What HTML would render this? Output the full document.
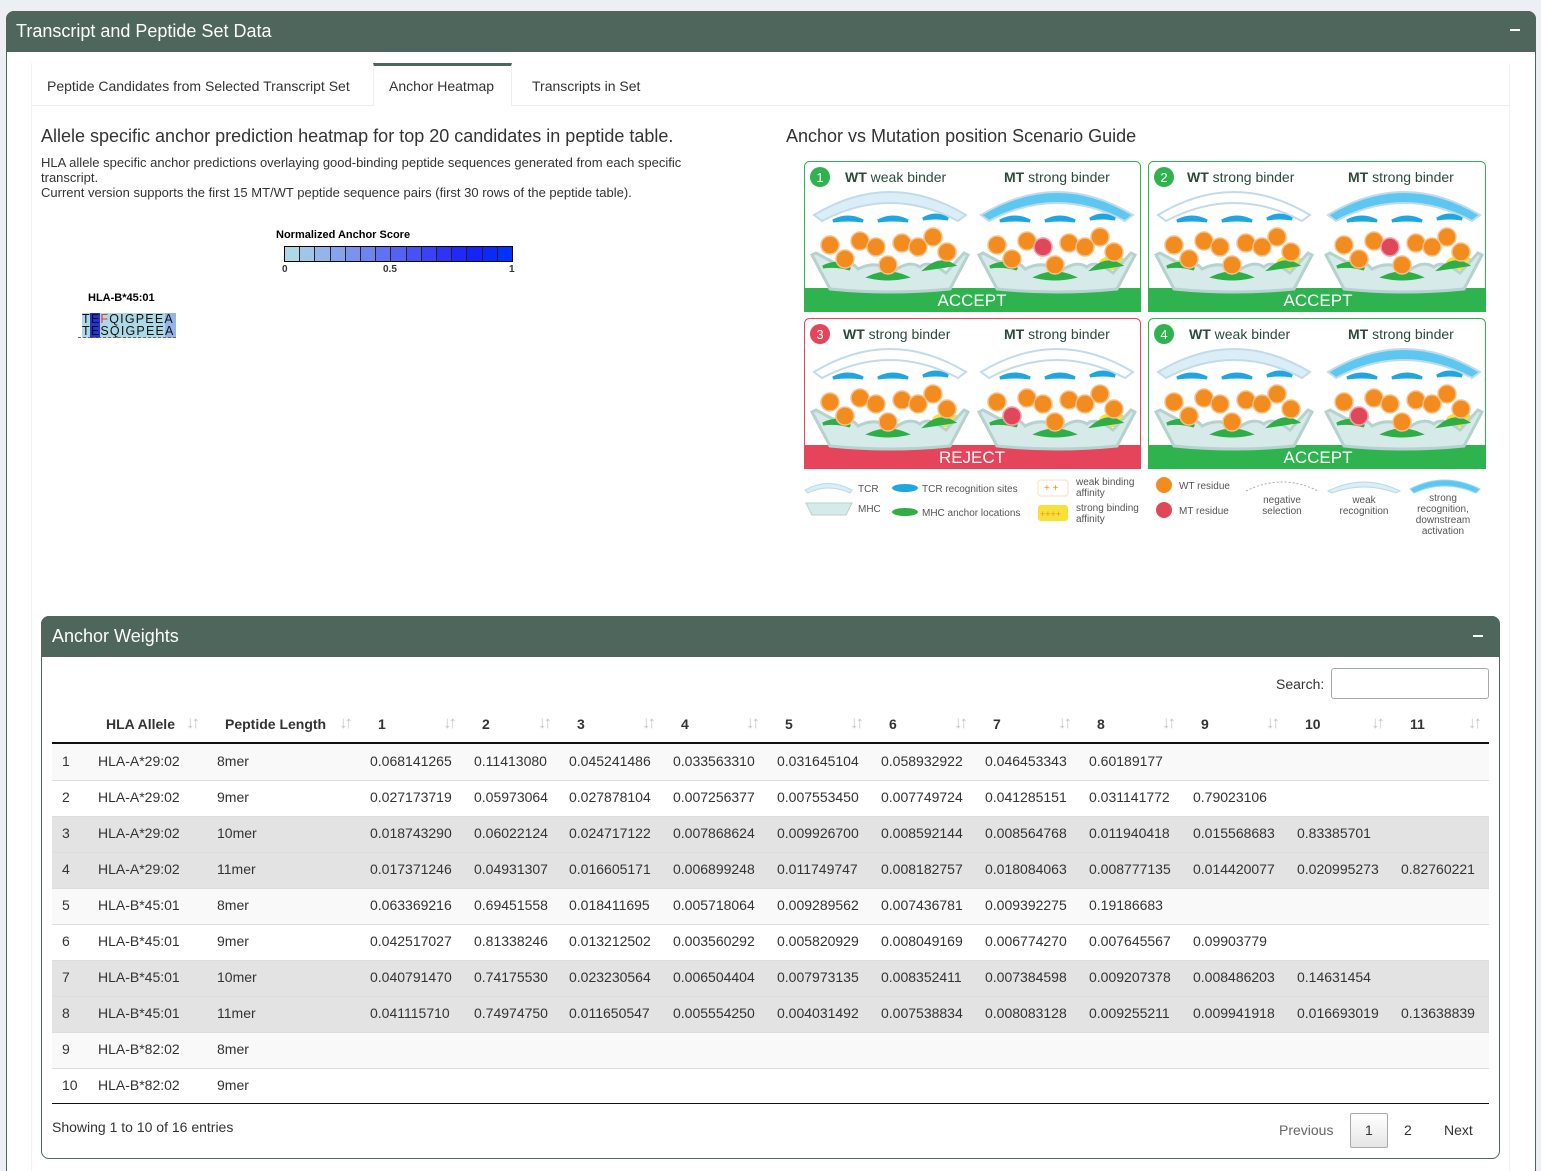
<!DOCTYPE html>
<html><head><meta charset="utf-8">
<style>
*{box-sizing:border-box;margin:0;padding:0}
html,body{width:1541px;height:1171px;overflow:hidden}
body{background:#ecf0f5;font-family:"Liberation Sans",sans-serif;color:#333;position:relative}
.abs{position:absolute}
.outer{left:6px;top:11px;width:1530px;height:1175px;background:#fff;border:1px solid #4f665c;border-radius:8px}
.hdr{left:6px;top:11px;width:1530px;height:41px;background:#4f665c;border-radius:8px 8px 0 0;color:#fff;font-size:18px;padding:10px 0 0 10px}
.tab{font-size:14px;color:#333;top:78px}
.t{font-size:14px;white-space:nowrap}
.th{font-size:14px;font-weight:bold;color:#333;top:716px}
.sort{color:#c8c8c8;font-size:17px;top:713px;letter-spacing:-3px;font-weight:bold}
.row{left:52px;width:1437px;height:36px;border-top:1px solid #ddd}
.cell{font-size:14px;color:#333;white-space:nowrap}
</style></head><body>
<div class="abs outer"></div>
<div class="abs hdr">Transcript and Peptide Set Data</div>
<div class="abs" style="left:1510px;top:29px;width:10px;height:2px;background:#fff"></div>
<div class="abs" style="left:31px;top:105px;width:1479px;height:1px;background:#eee"></div>
<div class="abs" style="left:31px;top:63px;width:1px;height:1108px;background:#f2f2f2"></div>
<div class="abs" style="left:1509px;top:63px;width:1px;height:1108px;background:#f2f2f2"></div>
<div class="abs" style="left:373px;top:63px;width:139px;height:43px;background:#fff;border:1px solid #eee;border-top:3px solid #4f665c;border-bottom:none"></div>
<div class="abs tab" style="left:47px">Peptide Candidates from Selected Transcript Set</div>
<div class="abs tab" style="left:389px">Anchor Heatmap</div>
<div class="abs tab" style="left:532px">Transcripts in Set</div>

<div class="abs" style="left:41px;top:126px;font-size:18px">Allele specific anchor prediction heatmap for top 20 candidates in peptide table.</div>
<div class="abs" style="left:41px;top:155px;font-size:13px;width:700px;line-height:15px">HLA allele specific anchor predictions overlaying good-binding peptide sequences generated from each specific transcript.<br>Current version supports the first 15 MT/WT peptide sequence pairs (first 30 rows of the peptide table).</div>
<div class="abs" style="left:786px;top:126px;font-size:18px">Anchor vs Mutation position Scenario Guide</div>

<div class="abs" style="left:276px;top:229px;font-size:11px;font-weight:bold;color:#000">Normalized Anchor Score</div>
<div class="abs" style="left:284px;top:246px;width:229px;height:16px;border:1px solid #000;display:flex">
<div style="flex:1;background:#add8e6;border-right:1px solid #222"></div><div style="flex:1;background:#a0c6e8;border-right:1px solid #222"></div><div style="flex:1;background:#93b5ea;border-right:1px solid #222"></div><div style="flex:1;background:#86a4ec;border-right:1px solid #222"></div><div style="flex:1;background:#7a93ee;border-right:1px solid #222"></div><div style="flex:1;background:#6d83ef;border-right:1px solid #222"></div><div style="flex:1;background:#6072f1;border-right:1px solid #222"></div><div style="flex:1;background:#5362f3;border-right:1px solid #222"></div><div style="flex:1;background:#4652f4;border-right:1px solid #222"></div><div style="flex:1;background:#3a42f6;border-right:1px solid #222"></div><div style="flex:1;background:#2d33f7;border-right:1px solid #222"></div><div style="flex:1;background:#2129f9;border-right:1px solid #222"></div><div style="flex:1;background:#1525fa;border-right:1px solid #222"></div><div style="flex:1;background:#0a2afc;border-right:1px solid #222"></div><div style="flex:1;background:#0033ff"></div></div>
<div class="abs" style="left:282px;top:264px;font-size:10px;font-weight:bold">0</div>
<div class="abs" style="left:383px;top:264px;font-size:10px;font-weight:bold">0.5</div>
<div class="abs" style="left:509px;top:264px;font-size:10px;font-weight:bold">1</div>
<div class="abs" style="left:88px;top:292px;font-size:11px;font-weight:bold;color:#000">HLA-B*45:01</div>
<div class="abs" style="left:82px;top:313px;width:94px;height:25px;background:#add8e6"></div>
<div class="abs" style="left:90px;top:313px;width:10px;height:25px;background:#2233d8"></div>
<div class="abs" style="left:165px;top:313px;width:11px;height:25px;background:#93b5ea"></div>
<div class="abs" style="left:82px;top:313px;font-size:12.5px;letter-spacing:1.2px;line-height:12px;color:#111">T<span>E</span><span style="color:#e33">F</span>QIGPEEA<br>TESQIGPEEA</div>
<div class="abs" style="left:78px;top:337px;width:98px;border-top:1px dashed #666"></div>

<svg class="abs" style="left:800px;top:155px" width="700" height="400" viewBox="0 0 700 400">
<defs>
<g id="ill">
<path d="M6,38 Q82,-8 158,38 L150,44 Q82,8 14,44 Z" fill="var(--tcr)" stroke="#c3dbe8" stroke-width="2"/>
<path d="M25,44 Q40,36 55,44 Q40,42 25,44Z M70,44 Q85,36 100,44 Q85,42 70,44Z M115,42 Q128,34 140,42 Q128,40 115,42Z" fill="#1fa6e0" stroke="#1fa6e0" stroke-width="3"/>
<path d="M4,78 L22,112 Q82,118 142,112 L160,78 L156,76 L138,96 Q120,82 112,90 Q100,82 84,96 Q70,82 50,92 Q42,82 34,90 L8,76 Z" fill="#d6ebe9" stroke="#b5d2ce" stroke-width="3"/>
<path d="M15,90 Q30,82 42,92 Q28,88 15,90Z M62,100 Q80,92 98,100 Q80,104 62,100Z M118,92 Q132,80 145,88 Q132,90 118,92Z" fill="#2fae48" stroke="#2fae48" stroke-width="3"/>
<g fill="#f28c1e" stroke="#f7c08a" stroke-width="1.5">
<circle cx="22" cy="68" r="9"/><circle cx="37" cy="82" r="9"/><circle cx="52" cy="64" r="9"/><circle cx="68" cy="70" r="9"/><circle cx="80" cy="88" r="9"/><circle cx="94" cy="66" r="9"/><circle cx="110" cy="70" r="9"/><circle cx="125" cy="60" r="9"/><circle cx="139" cy="75" r="9"/>
</g></g>
<g id="yel"><ellipse cx="30" cy="90" rx="14" ry="7" fill="#f7e03a"/><ellipse cx="82" cy="98" rx="16" ry="7" fill="#f7e03a"/><ellipse cx="138" cy="86" rx="14" ry="7" fill="#f7e03a"/></g>
</defs>
<g><rect x="4.5" y="6.5" width="336" height="150" rx="5" fill="#fff" stroke="#2fb34f"/><rect x="4" y="133" width="337" height="24" fill="#2fb34f"/>
<text x="172" y="151" font-size="17" fill="#fff" text-anchor="middle" font-family="Liberation Sans">ACCEPT</text>
<circle cx="20" cy="22" r="10" fill="#2fb34f"/><text x="20" y="27" font-size="13" fill="#fff" text-anchor="middle" font-family="Liberation Sans">1</text>
<text x="45" y="27" font-size="14" fill="#2a4a3a" font-family="Liberation Sans"><tspan font-weight="bold">WT</tspan> weak binder</text>
<text x="204" y="27" font-size="14" fill="#2a4a3a" font-family="Liberation Sans"><tspan font-weight="bold">MT</tspan> strong binder</text>
<use href="#ill" x="8" y="22" style="--tcr:#d9eef7"/><use href="#yel" x="175" y="22"/><use href="#ill" x="175" y="22" style="--tcr:#5cc8f2"/>
<circle cx="243" cy="92" r="9" fill="#e0475a" stroke="#f0a0b0" stroke-width="1.5"/></g>

<g transform="translate(344,0)"><rect x="4.5" y="6.5" width="337" height="150" rx="5" fill="#fff" stroke="#2fb34f"/><rect x="4" y="133" width="338" height="24" fill="#2fb34f"/>
<text x="174" y="151" font-size="17" fill="#fff" text-anchor="middle" font-family="Liberation Sans">ACCEPT</text>
<circle cx="20" cy="22" r="10" fill="#2fb34f"/><text x="20" y="27" font-size="13" fill="#fff" text-anchor="middle" font-family="Liberation Sans">2</text>
<text x="43" y="27" font-size="14" fill="#2a4a3a" font-family="Liberation Sans"><tspan font-weight="bold">WT</tspan> strong binder</text>
<text x="204" y="27" font-size="14" fill="#2a4a3a" font-family="Liberation Sans"><tspan font-weight="bold">MT</tspan> strong binder</text>
<use href="#yel" x="8" y="22"/><use href="#ill" x="8" y="22" style="--tcr:#fff"/><use href="#yel" x="178" y="22"/><use href="#ill" x="178" y="22" style="--tcr:#5cc8f2"/>
<circle cx="246" cy="92" r="9" fill="#e0475a" stroke="#f0a0b0" stroke-width="1.5"/></g>

<g transform="translate(0,157)"><rect x="4.5" y="6.5" width="336" height="150" rx="5" fill="#fff" stroke="#e5445a"/><rect x="4" y="133" width="337" height="24" fill="#e5445a"/>
<text x="172" y="151" font-size="17" fill="#fff" text-anchor="middle" font-family="Liberation Sans">REJECT</text>
<circle cx="20" cy="22" r="10" fill="#e5445a"/><text x="20" y="27" font-size="13" fill="#fff" text-anchor="middle" font-family="Liberation Sans">3</text>
<text x="43" y="27" font-size="14" fill="#2a4a3a" font-family="Liberation Sans"><tspan font-weight="bold">WT</tspan> strong binder</text>
<text x="204" y="27" font-size="14" fill="#2a4a3a" font-family="Liberation Sans"><tspan font-weight="bold">MT</tspan> strong binder</text>
<use href="#yel" x="8" y="22"/><use href="#ill" x="8" y="22" style="--tcr:#fff"/><use href="#yel" x="175" y="22"/><use href="#ill" x="175" y="22" style="--tcr:#fff"/>
<circle cx="212" cy="104" r="9" fill="#e0475a" stroke="#f0a0b0" stroke-width="1.5"/></g>

<g transform="translate(344,157)"><rect x="4.5" y="6.5" width="337" height="150" rx="5" fill="#fff" stroke="#2fb34f"/><rect x="4" y="133" width="338" height="24" fill="#2fb34f"/>
<text x="174" y="151" font-size="17" fill="#fff" text-anchor="middle" font-family="Liberation Sans">ACCEPT</text>
<circle cx="20" cy="22" r="10" fill="#2fb34f"/><text x="20" y="27" font-size="13" fill="#fff" text-anchor="middle" font-family="Liberation Sans">4</text>
<text x="45" y="27" font-size="14" fill="#2a4a3a" font-family="Liberation Sans"><tspan font-weight="bold">WT</tspan> weak binder</text>
<text x="204" y="27" font-size="14" fill="#2a4a3a" font-family="Liberation Sans"><tspan font-weight="bold">MT</tspan> strong binder</text>
<use href="#ill" x="8" y="22" style="--tcr:#d9eef7"/><use href="#yel" x="178" y="22"/><use href="#ill" x="178" y="22" style="--tcr:#5cc8f2"/>
<circle cx="215" cy="104" r="9" fill="#e0475a" stroke="#f0a0b0" stroke-width="1.5"/></g>

<g font-family="Liberation Sans" font-size="10" fill="#555">
<path d="M5,335 Q28,322 52,335 L50,338 Q28,328 8,338Z" fill="#d9eef7" stroke="#bcd8e6"/><text x="58" y="337">TCR</text>
<path d="M6,348 L12,360 L46,360 L52,348Z" fill="#d6ebe9" stroke="#b5d2ce"/><text x="58" y="357">MHC</text>
<ellipse cx="105" cy="333" rx="13" ry="4" fill="#1fa6e0"/><text x="122" y="337">TCR recognition sites</text>
<ellipse cx="105" cy="357" rx="13" ry="4" fill="#2fae48"/><text x="122" y="361">MHC anchor locations</text>
<rect x="238" y="325" width="30" height="16" rx="3" fill="#fff" stroke="#f3e2c0"/><text x="244" y="336" fill="#f28c1e" font-size="10">+ +</text><text x="276" y="330">weak binding</text><text x="276" y="341">affinity</text>
<rect x="238" y="350" width="30" height="16" rx="3" fill="#f7e03a"/><text x="240" y="362" fill="#f28c1e" font-size="9">++++</text><text x="276" y="356">strong binding</text><text x="276" y="367">affinity</text>
<circle cx="364" cy="330" r="8" fill="#f28c1e"/><text x="379" y="334">WT residue</text>
<circle cx="364" cy="355" r="8" fill="#e0475a"/><text x="379" y="359">MT residue</text>
<path d="M446,336 Q482,318 518,336" fill="#fff" stroke="#aaa" stroke-dasharray="2,2"/><text x="482" y="348" text-anchor="middle">negative</text><text x="482" y="359" text-anchor="middle">selection</text>
<path d="M528,336 Q564,318 600,336 L596,338 Q564,326 532,338Z" fill="#d9eef7" stroke="#bcd8e6"/><text x="564" y="348" text-anchor="middle">weak</text><text x="564" y="359" text-anchor="middle">recognition</text>
<path d="M610,334 Q644,316 680,334 L676,338 Q644,324 614,338Z" fill="#5cc8f2" stroke="#9ed8f0"/><text x="643" y="346" text-anchor="middle">strong</text><text x="643" y="357" text-anchor="middle">recognition,</text><text x="643" y="368" text-anchor="middle">downstream</text><text x="643" y="379" text-anchor="middle">activation</text>
</g>
</svg>

<div class="abs" style="left:41px;top:616px;width:1459px;height:543px;border:1px solid #4f665c;border-radius:8px;background:#fff"></div>
<div class="abs" style="left:41px;top:616px;width:1459px;height:41px;background:#4f665c;border-radius:8px 8px 0 0;color:#fff;font-size:18px;padding:10px 0 0 11px">Anchor Weights</div>
<div class="abs" style="left:1473px;top:635px;width:10px;height:2px;background:#fff"></div>
<div class="abs t" style="left:1276px;top:676px">Search:</div>
<div class="abs" style="left:1331px;top:668px;width:158px;height:31px;border:1px solid #aaa;border-radius:3px"></div>

<div class="abs th" style="left:106px">HLA Allele</div><div class="abs sort" style="left:186px">↓↑</div>
<div class="abs th" style="left:225px">Peptide Length</div><div class="abs sort" style="left:339px">↓↑</div>
<div class="abs th" style="left:378px">1</div><div class="abs sort" style="left:443px">↓↑</div>
<div class="abs th" style="left:482px">2</div><div class="abs sort" style="left:538px">↓↑</div>
<div class="abs th" style="left:577px">3</div><div class="abs sort" style="left:642px">↓↑</div>
<div class="abs th" style="left:681px">4</div><div class="abs sort" style="left:746px">↓↑</div>
<div class="abs th" style="left:785px">5</div><div class="abs sort" style="left:850px">↓↑</div>
<div class="abs th" style="left:889px">6</div><div class="abs sort" style="left:954px">↓↑</div>
<div class="abs th" style="left:993px">7</div><div class="abs sort" style="left:1058px">↓↑</div>
<div class="abs th" style="left:1097px">8</div><div class="abs sort" style="left:1162px">↓↑</div>
<div class="abs th" style="left:1201px">9</div><div class="abs sort" style="left:1266px">↓↑</div>
<div class="abs th" style="left:1305px">10</div><div class="abs sort" style="left:1371px">↓↑</div>
<div class="abs th" style="left:1410px">11</div><div class="abs sort" style="left:1468px">↓↑</div>
<div class="abs" style="left:52px;top:742px;width:1437px;height:2px;background:#111"></div>

<div class="abs row" style="top:744px;background:#f9f9f9;border-top:none"></div>
<div class="abs row" style="top:780px;background:#fff"></div>
<div class="abs row" style="top:816px;background:#e3e3e3"></div>
<div class="abs row" style="top:852px;background:#e3e3e3"></div>
<div class="abs row" style="top:888px;background:#f9f9f9"></div>
<div class="abs row" style="top:924px;background:#fff"></div>
<div class="abs row" style="top:960px;background:#e3e3e3"></div>
<div class="abs row" style="top:996px;background:#e3e3e3"></div>
<div class="abs row" style="top:1032px;background:#f9f9f9"></div>
<div class="abs row" style="top:1068px;background:#fff"></div>
<div class="abs" style="left:52px;top:1103px;width:1437px;height:1px;background:#111"></div>

<div class="abs" style="left:0;top:744px">
<div class="abs cell" style="top:9px;left:62px">1</div><div class="abs cell" style="top:9px;left:98px">HLA-A*29:02</div><div class="abs cell" style="top:9px;left:217px">8mer</div>
<div class="abs cell" style="top:9px;left:370px">0.068141265</div><div class="abs cell" style="top:9px;left:474px">0.11413080</div><div class="abs cell" style="top:9px;left:569px">0.045241486</div><div class="abs cell" style="top:9px;left:673px">0.033563310</div><div class="abs cell" style="top:9px;left:777px">0.031645104</div><div class="abs cell" style="top:9px;left:881px">0.058932922</div><div class="abs cell" style="top:9px;left:985px">0.046453343</div><div class="abs cell" style="top:9px;left:1089px">0.60189177</div>

<div class="abs cell" style="top:45px;left:62px">2</div><div class="abs cell" style="top:45px;left:98px">HLA-A*29:02</div><div class="abs cell" style="top:45px;left:217px">9mer</div>
<div class="abs cell" style="top:45px;left:370px">0.027173719</div><div class="abs cell" style="top:45px;left:474px">0.05973064</div><div class="abs cell" style="top:45px;left:569px">0.027878104</div><div class="abs cell" style="top:45px;left:673px">0.007256377</div><div class="abs cell" style="top:45px;left:777px">0.007553450</div><div class="abs cell" style="top:45px;left:881px">0.007749724</div><div class="abs cell" style="top:45px;left:985px">0.041285151</div><div class="abs cell" style="top:45px;left:1089px">0.031141772</div><div class="abs cell" style="top:45px;left:1193px">0.79023106</div>

<div class="abs cell" style="top:81px;left:62px">3</div><div class="abs cell" style="top:81px;left:98px">HLA-A*29:02</div><div class="abs cell" style="top:81px;left:217px">10mer</div>
<div class="abs cell" style="top:81px;left:370px">0.018743290</div><div class="abs cell" style="top:81px;left:474px">0.06022124</div><div class="abs cell" style="top:81px;left:569px">0.024717122</div><div class="abs cell" style="top:81px;left:673px">0.007868624</div><div class="abs cell" style="top:81px;left:777px">0.009926700</div><div class="abs cell" style="top:81px;left:881px">0.008592144</div><div class="abs cell" style="top:81px;left:985px">0.008564768</div><div class="abs cell" style="top:81px;left:1089px">0.011940418</div><div class="abs cell" style="top:81px;left:1193px">0.015568683</div><div class="abs cell" style="top:81px;left:1297px">0.83385701</div>

<div class="abs cell" style="top:117px;left:62px">4</div><div class="abs cell" style="top:117px;left:98px">HLA-A*29:02</div><div class="abs cell" style="top:117px;left:217px">11mer</div>
<div class="abs cell" style="top:117px;left:370px">0.017371246</div><div class="abs cell" style="top:117px;left:474px">0.04931307</div><div class="abs cell" style="top:117px;left:569px">0.016605171</div><div class="abs cell" style="top:117px;left:673px">0.006899248</div><div class="abs cell" style="top:117px;left:777px">0.011749747</div><div class="abs cell" style="top:117px;left:881px">0.008182757</div><div class="abs cell" style="top:117px;left:985px">0.018084063</div><div class="abs cell" style="top:117px;left:1089px">0.008777135</div><div class="abs cell" style="top:117px;left:1193px">0.014420077</div><div class="abs cell" style="top:117px;left:1297px">0.020995273</div><div class="abs cell" style="top:117px;left:1401px">0.82760221</div>

<div class="abs cell" style="top:153px;left:62px">5</div><div class="abs cell" style="top:153px;left:98px">HLA-B*45:01</div><div class="abs cell" style="top:153px;left:217px">8mer</div>
<div class="abs cell" style="top:153px;left:370px">0.063369216</div><div class="abs cell" style="top:153px;left:474px">0.69451558</div><div class="abs cell" style="top:153px;left:569px">0.018411695</div><div class="abs cell" style="top:153px;left:673px">0.005718064</div><div class="abs cell" style="top:153px;left:777px">0.009289562</div><div class="abs cell" style="top:153px;left:881px">0.007436781</div><div class="abs cell" style="top:153px;left:985px">0.009392275</div><div class="abs cell" style="top:153px;left:1089px">0.19186683</div>

<div class="abs cell" style="top:189px;left:62px">6</div><div class="abs cell" style="top:189px;left:98px">HLA-B*45:01</div><div class="abs cell" style="top:189px;left:217px">9mer</div>
<div class="abs cell" style="top:189px;left:370px">0.042517027</div><div class="abs cell" style="top:189px;left:474px">0.81338246</div><div class="abs cell" style="top:189px;left:569px">0.013212502</div><div class="abs cell" style="top:189px;left:673px">0.003560292</div><div class="abs cell" style="top:189px;left:777px">0.005820929</div><div class="abs cell" style="top:189px;left:881px">0.008049169</div><div class="abs cell" style="top:189px;left:985px">0.006774270</div><div class="abs cell" style="top:189px;left:1089px">0.007645567</div><div class="abs cell" style="top:189px;left:1193px">0.09903779</div>

<div class="abs cell" style="top:225px;left:62px">7</div><div class="abs cell" style="top:225px;left:98px">HLA-B*45:01</div><div class="abs cell" style="top:225px;left:217px">10mer</div>
<div class="abs cell" style="top:225px;left:370px">0.040791470</div><div class="abs cell" style="top:225px;left:474px">0.74175530</div><div class="abs cell" style="top:225px;left:569px">0.023230564</div><div class="abs cell" style="top:225px;left:673px">0.006504404</div><div class="abs cell" style="top:225px;left:777px">0.007973135</div><div class="abs cell" style="top:225px;left:881px">0.008352411</div><div class="abs cell" style="top:225px;left:985px">0.007384598</div><div class="abs cell" style="top:225px;left:1089px">0.009207378</div><div class="abs cell" style="top:225px;left:1193px">0.008486203</div><div class="abs cell" style="top:225px;left:1297px">0.14631454</div>

<div class="abs cell" style="top:261px;left:62px">8</div><div class="abs cell" style="top:261px;left:98px">HLA-B*45:01</div><div class="abs cell" style="top:261px;left:217px">11mer</div>
<div class="abs cell" style="top:261px;left:370px">0.041115710</div><div class="abs cell" style="top:261px;left:474px">0.74974750</div><div class="abs cell" style="top:261px;left:569px">0.011650547</div><div class="abs cell" style="top:261px;left:673px">0.005554250</div><div class="abs cell" style="top:261px;left:777px">0.004031492</div><div class="abs cell" style="top:261px;left:881px">0.007538834</div><div class="abs cell" style="top:261px;left:985px">0.008083128</div><div class="abs cell" style="top:261px;left:1089px">0.009255211</div><div class="abs cell" style="top:261px;left:1193px">0.009941918</div><div class="abs cell" style="top:261px;left:1297px">0.016693019</div><div class="abs cell" style="top:261px;left:1401px">0.13638839</div>

<div class="abs cell" style="top:297px;left:62px">9</div><div class="abs cell" style="top:297px;left:98px">HLA-B*82:02</div><div class="abs cell" style="top:297px;left:217px">8mer</div>
<div class="abs cell" style="top:333px;left:62px">10</div><div class="abs cell" style="top:333px;left:98px">HLA-B*82:02</div><div class="abs cell" style="top:333px;left:217px">9mer</div>
</div>

<div class="abs t" style="left:52px;top:1119px">Showing 1 to 10 of 16 entries</div>
<div class="abs t" style="left:1279px;top:1122px;color:#666">Previous</div>
<div class="abs" style="left:1350px;top:1113px;width:38px;height:35px;border:1px solid #aaa;border-radius:2px;background:linear-gradient(#fff,#e6e6e6)"></div>
<div class="abs t" style="left:1365px;top:1122px">1</div>
<div class="abs t" style="left:1404px;top:1122px">2</div>
<div class="abs t" style="left:1444px;top:1122px">Next</div>
</body></html>
